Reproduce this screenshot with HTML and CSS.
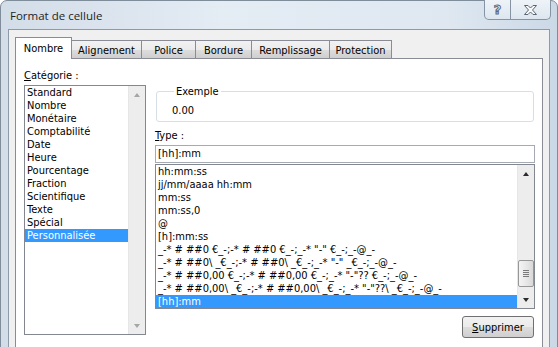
FILE: index.html
```html
<!DOCTYPE html>
<html lang="fr">
<head>
  <meta charset="UTF-8" />
  <title>Format de cellule</title>
  <link rel="stylesheet" href="styles.css">
</head>
<body>
  <div class="window">
    <div class="titlebar">
      <span class="title">Format de cellule</span>
      <div class="caption">
        <span class="cap help">?</span>
        <span class="cap close">
          <svg width="13" height="10" viewBox="0 0 13 10"><polygon points="0.5,0.5 4,0.5 6.5,3 9,0.5 12.5,0.5 8.5,5 12.5,9.5 9,9.5 6.5,7 4,9.5 0.5,9.5 4.5,5" /></svg>
        </span>
      </div>
    </div>

    <div class="client">
      <div class="tabs">
        <div class="tab active w-nombre">Nombre</div>
        <div class="tab w-align">Alignement</div>
        <div class="tab w-police">Police</div>
        <div class="tab w-bordure">Bordure</div>
        <div class="tab w-rempl">Remplissage</div>
        <div class="tab w-protect">Protection</div>
      </div>

      <div class="panel">
        <div class="col-left">
          <div class="label"><u>C</u>atégorie :</div>
          <div class="listbox cat">
            <ul class="items">
              <li>Standard</li>
              <li>Nombre</li>
              <li>Monétaire</li>
              <li>Comptabilité</li>
              <li>Date</li>
              <li>Heure</li>
              <li>Pourcentage</li>
              <li>Fraction</li>
              <li>Scientifique</li>
              <li>Texte</li>
              <li>Spécial</li>
              <li class="sel">Personnalisée</li>
            </ul>
            <div class="vscroll off">
              <div class="arrow up"></div>
              <div class="track"></div>
              <div class="arrow down"></div>
            </div>
          </div>
        </div>

        <div class="col-right">
          <fieldset class="sample">
            <legend>Exemple</legend>
            <div class="sample-value">0.00</div>
          </fieldset>
          <div class="label type-label"><u>T</u>ype :</div>
          <div class="textbox">[hh]:mm</div>
          <div class="listbox fmt">
            <ul class="items">
              <li>hh:mm:ss</li>
              <li>jj/mm/aaaa hh:mm</li>
              <li>mm:ss</li>
              <li>mm:ss,0</li>
              <li>@</li>
              <li>[h]:mm:ss</li>
              <li>_-* # ##0 €_-;-* # ##0 €_-;_-* "-" €_-;_-@_-</li>
              <li>_-* # ##0\ _€_-;-* # ##0\ _€_-;_-* "-" _€_-;_-@_-</li>
              <li>_-* # ##0,00 €_-;-* # ##0,00 €_-;_-* "-"?? €_-;_-@_-</li>
              <li>_-* # ##0,00\ _€_-;-* # ##0,00\ _€_-;_-* "-"??\ _€_-;_-@_-</li>
              <li class="sel">[hh]:mm</li>
            </ul>
            <div class="vscroll">
              <div class="arrow up"></div>
              <div class="track"><div class="thumb"><i></i><i></i><i></i><i></i></div></div>
              <div class="arrow down"></div>
            </div>
          </div>
          <div class="actions"><button class="btn"><u>S</u>upprimer</button></div>
        </div>
      </div>
    </div>
  </div>
</body>
</html>
```

FILE: styles.css
```css
* {box-sizing: border-box;}
body {margin: 0; background: #fff; color: #000; overflow: hidden;
      font-family: "DejaVu Sans Condensed", "DejaVu Sans", sans-serif; font-size: 11px;}

/* window frame */
.window {width: 558px; height: 360px; padding: 0 7px; display: flex; flex-direction: column;
         border: 1px solid #7f8c99; border-radius: 7px 7px 0 0;
         background: linear-gradient(90deg, #d3dde8, #e4ecf4 40%, #dfe8f1 80%, #cbd8e6);}
.titlebar {height: 28px; display: flex; align-items: flex-start; flex-shrink: 0;}
.title {margin: 7px 0 0 2px; font-family: "Open Sans", sans-serif; font-size: 11.5px; line-height: 16px; color: #1e1e1e;}
.caption {margin: -1px -1px 0 auto; display: flex; height: 20px;
          border: 1px solid #8593a3; border-top: none; border-radius: 0 0 5px 5px;
          background: linear-gradient(#eef3f8, #dde6ef); overflow: hidden;}
.cap {display: flex; align-items: center; justify-content: center; height: 19px;}
.cap.help {width: 26px; border-right: 1px solid #8593a3; color: transparent;
           -webkit-text-stroke: 1px #5d6773; font-family: "DejaVu Sans", sans-serif; font-size: 13px; font-weight: bold;}
.cap.close {width: 39px;}
.cap.close polygon {fill: #f6f8fa; stroke: #5d6773; stroke-width: 1;}

/* client area */
.client {flex: 1; border: 1px solid #8d9aa8; background: #f0f0f0; padding: 7px 6px 0 6px;
         display: flex; flex-direction: column;}
.tabs {display: flex; align-items: flex-end; height: 21px; flex-shrink: 0;}
.tab {height: 18px; margin-left: -1px; border: 1px solid #898c95; border-bottom: none;
      display: flex; align-items: center; justify-content: center; padding-top: 1px; line-height: 13px;
      background: linear-gradient(#f2f2f2, #ebebeb 50%, #dddddd 51%, #cfcfcf);}
.tab.active {height: 22px; margin-bottom: -1px; margin-left: 0; background: #fff; position: relative; z-index: 1; padding-top: 0;}
.w-nombre  {width: 57px;}
.w-align   {width: 71px;}
.w-police  {width: 55px;}
.w-bordure {width: 57px;}
.w-rempl   {width: 79px;}
.w-protect {width: 63px;}

.panel {flex: 1; width: 528px; border: 1px solid #898c95; background: #fff;
        display: flex; gap: 9px; padding: 10px 7px 0 8px;}
.label {line-height: 13px; height: 13px;}
.col-left {width: 122px;}
.col-left .listbox {margin-top: 3px;}
.col-right {width: 380px; padding-top: 16px; display: flex; flex-direction: column;}

/* list boxes */
.listbox {display: flex; border: 1px solid #828790; background: #fff;}
.listbox.cat {height: 250px;}
.listbox.fmt {height: 145px; margin-top: 1px;}
.items {list-style: none; margin: 0; padding: 0; flex: 1; overflow: hidden;}
.items li {height: 13px; line-height: 13px; padding-left: 2px; white-space: pre;}
.items li.sel {background: #3399ff; color: #fff;}

.vscroll {width: 17px; display: flex; flex-direction: column; background: #ededed; border-left: 1px solid #e6e6e6;}
.vscroll .track {flex: 1;}
.arrow {height: 17px; display: flex; align-items: center; justify-content: center;}
.arrow::after {content: ""; border-left: 3.5px solid transparent; border-right: 3.5px solid transparent;}
.arrow.up::after {border-bottom: 4px solid #2b2b2b;}
.arrow.down::after {border-top: 4px solid #2b2b2b;}
.vscroll.off .arrow.up::after {border-bottom-color: #a6a6a6;}
.vscroll.off .arrow.down::after {border-top-color: #a6a6a6;}
.thumb {margin: 78px 0 0 0; height: 27px; border: 1px solid #979797; border-radius: 2px;
        background: linear-gradient(90deg, #f4f4f4, #e8e8e8 50%, #d9d9d9);
        display: flex; flex-direction: column; align-items: center; justify-content: center; gap: 1px;}
.thumb i {display: block; width: 6px; height: 1px; background: #7a7a7a;}

/* example group */
.sample {margin: 0 1px 0 1px; padding: 6px 0 4px 15px; border: 1px solid #d5dfe5; border-radius: 3px; min-width: 0;}
.sample legend {padding: 0 2px; margin-left: 2px; line-height: 13px;}
.sample-value {line-height: 13px;}
.type-label {margin-top: 7px;}
.textbox {margin-top: 3px; height: 18px; line-height: 16px; padding-left: 2px; border: 1px solid #a6abb3;}

.actions {display: flex; justify-content: flex-end; margin-top: 7px;}
.btn {width: 72px; height: 22px; margin-right: 1px; border: 1px solid #707070; border-radius: 3px;
      font: inherit; color: #000; padding: 0;
      background: linear-gradient(#f2f2f2, #ebebeb 50%, #dddddd 51%, #cfcfcf);}
```
